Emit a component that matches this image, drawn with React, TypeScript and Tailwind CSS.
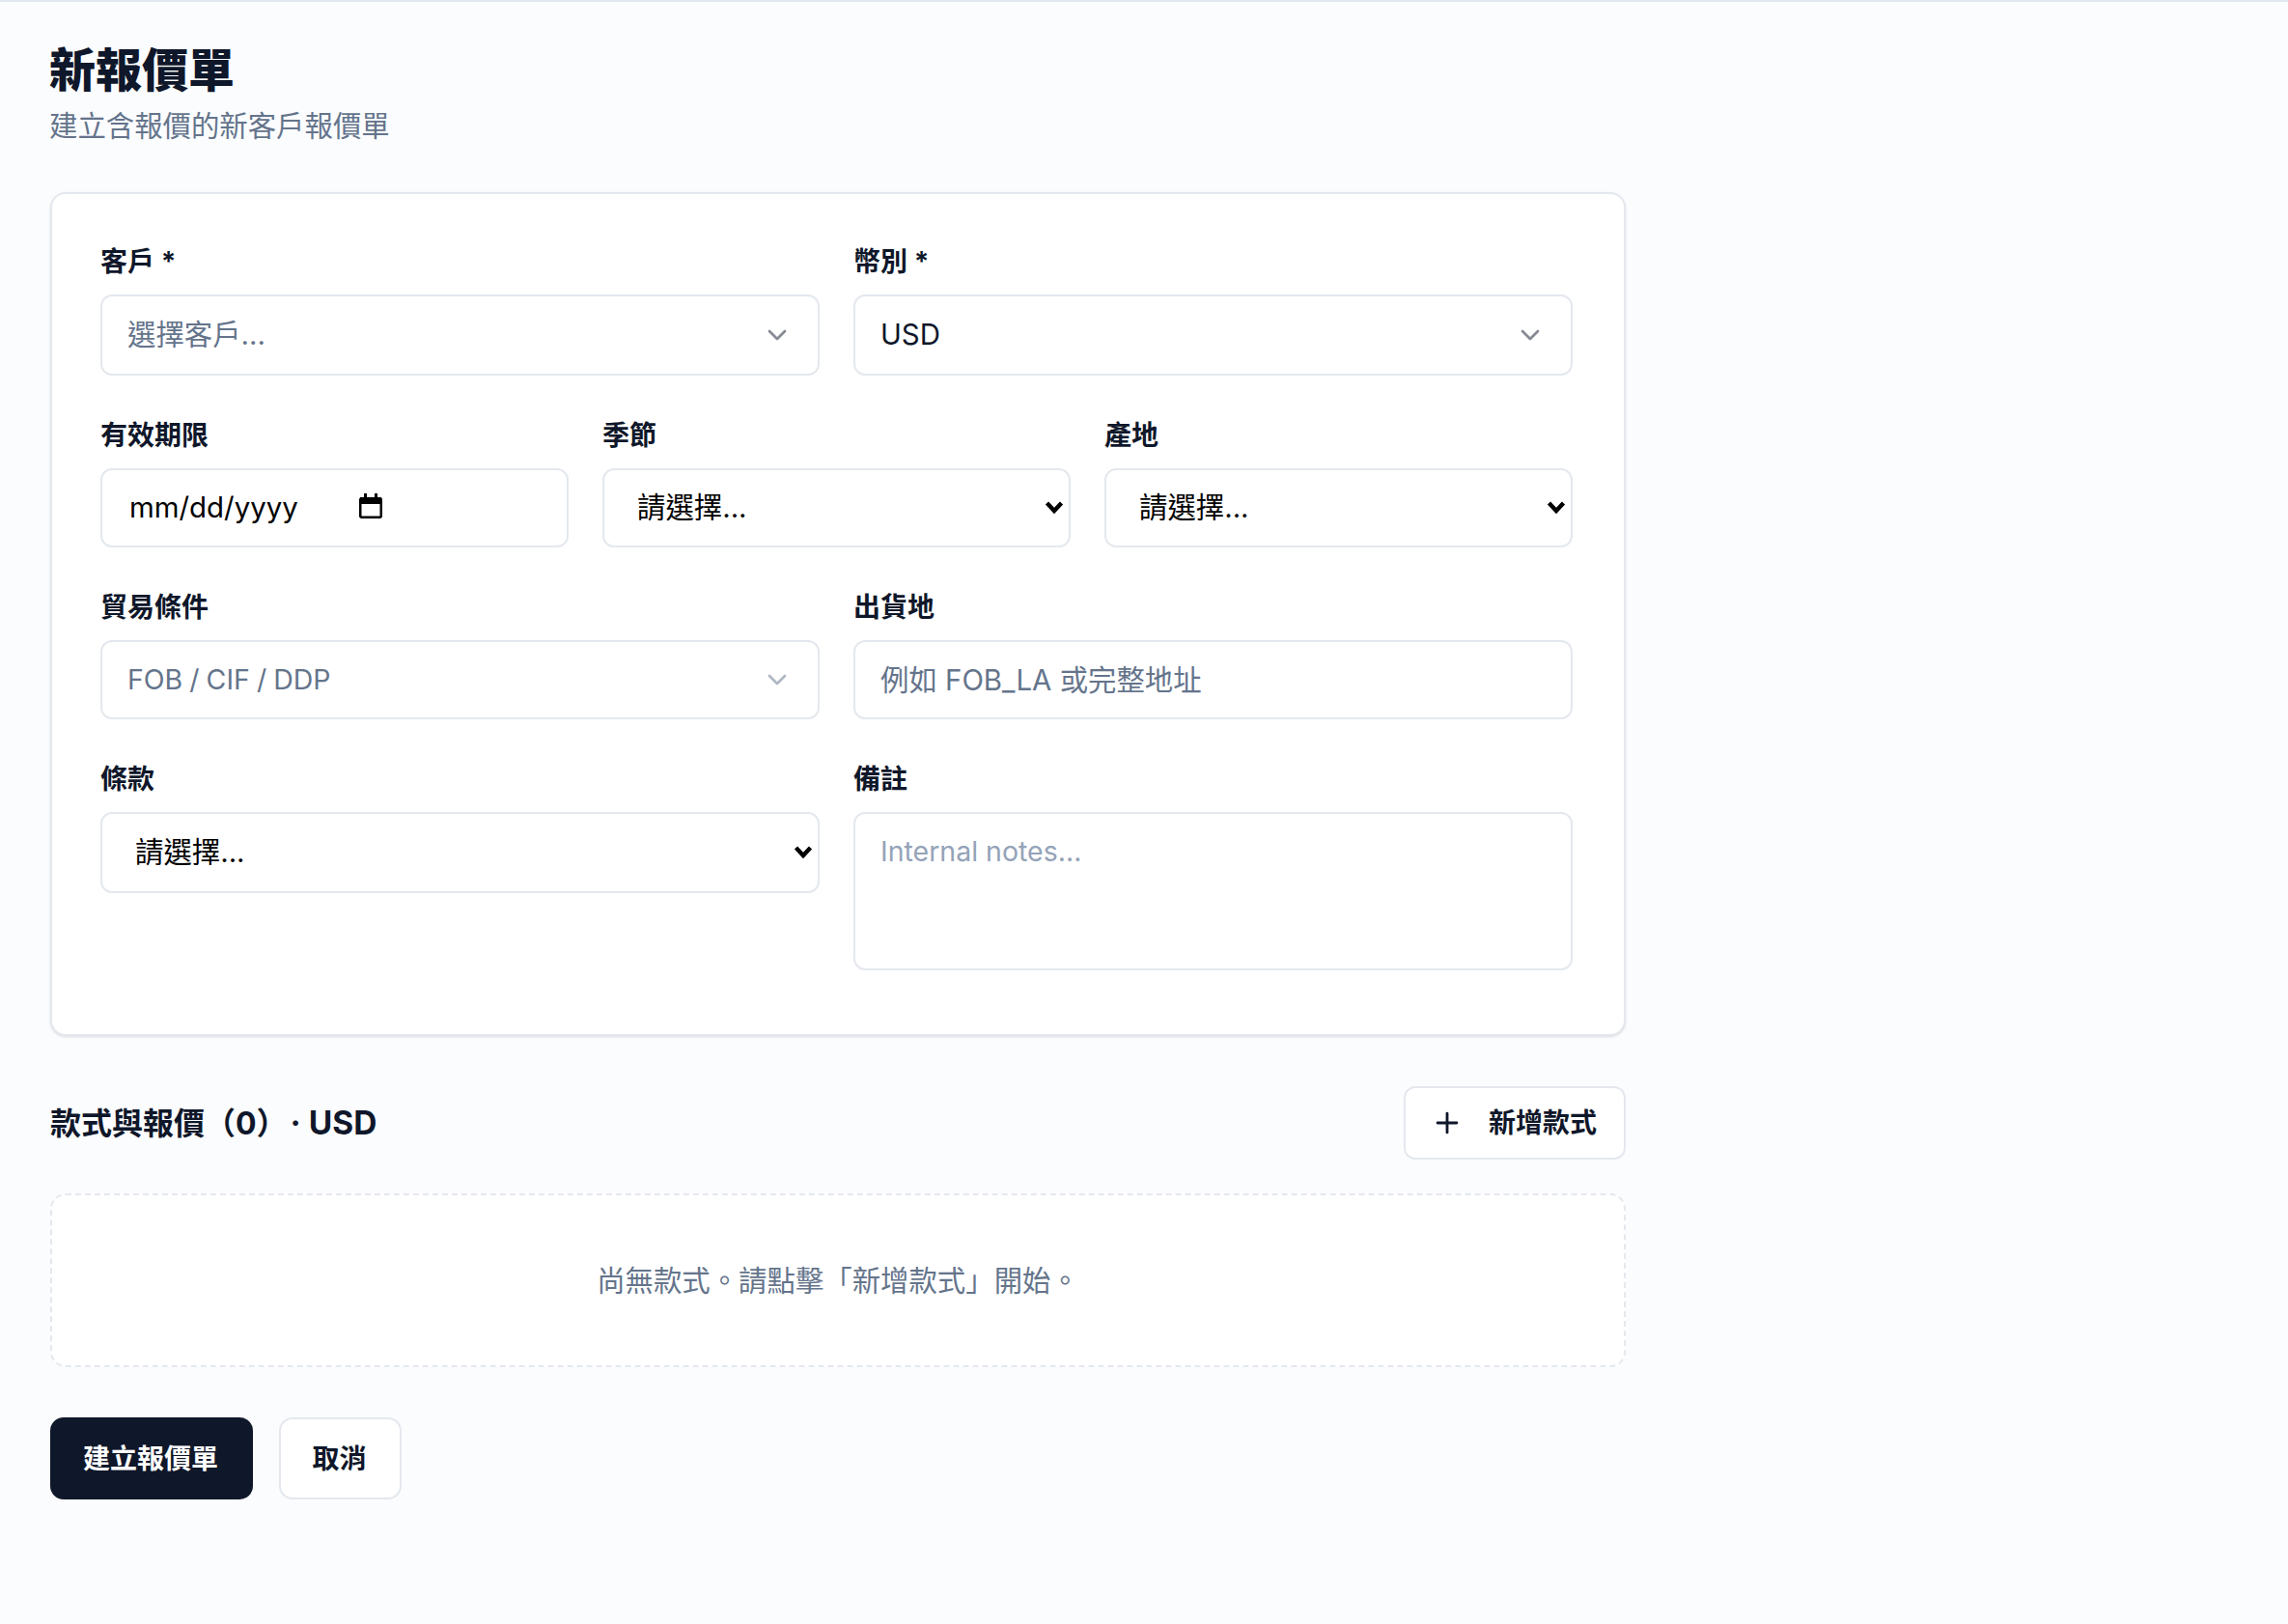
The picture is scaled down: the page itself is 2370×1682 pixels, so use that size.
import React from "react";
import { ChevronDown, Plus } from "lucide-react";

const fieldBox =
  "flex w-full items-center justify-between rounded-[12px] border-2 border-[#e4e8ee] bg-white";

const Label = ({ children }: { children: React.ReactNode }) => (
  <label className="mb-[14px] block text-[28px] leading-[40px] font-bold text-[#0f172a]">
    {children}
  </label>
);

const Combo = ({ text, muted }: { text: string; muted?: boolean }) => (
  <div className={`${fieldBox} h-[84px] pl-[26px] pr-[26px]`}>
    <span className={`text-[29.4px] ${muted ? "text-[#64748b]" : "text-[#0f172a]"}`}>{text}</span>
    <ChevronDown size={32} className="text-[#0f172a] opacity-50" />
  </div>
);

const NativeSelect = ({ h = "h-[82px]" }: { h?: string }) => (
  <div className={`${fieldBox} ${h} pl-[34px] pr-[3px]`}>
    <span className="text-[29.4px] text-black">請選擇...</span>
    <svg width="24" height="16" viewBox="0 0 24 16" fill="none">
      <path d="M4.5 3 L12 11 L19.5 3" stroke="#000" strokeWidth="4.4" />
    </svg>
  </div>
);

export default function App() {
  return (
    <div className="min-h-[1682px] border-t-2 border-[#e2e8f0] bg-[#fbfcfe] pl-[52px] pt-[44px] font-['Inter','Noto_Sans_CJK_TC',sans-serif]">
      <div className="w-[1632px]">
        <h1 className="-ml-[1px] text-[48px] leading-[54px] font-black text-[#0f172a]">新報價單</h1>
        <p className="-ml-[1px] mt-[11px] text-[29.4px] leading-[40px] text-[#64748b]">建立含報價的新客戶報價單</p>

        <div className="mt-[48px] rounded-[16px] border-2 border-[#e4e8ee] bg-white pb-[66px] pl-[50px] pr-[53px] pt-[50px] shadow-sm">
          <div className="grid grid-cols-2 gap-x-[35px]">
            <div>
              <Label>客戶 *</Label>
              <Combo text="選擇客戶..." muted />
            </div>
            <div>
              <Label>幣別 *</Label>
              <Combo text="USD" />
            </div>
          </div>

          <div className="mt-[42px] grid grid-cols-3 gap-x-[35px]">
            <div>
              <Label>有效期限</Label>
              <div className={`${fieldBox} h-[82px] justify-start pl-[28px]`}>
                <span className="text-[29.4px] text-black">mm/dd/yyyy</span>
                <svg width="24" height="26" viewBox="0 0 24 26" className="ml-[63px] -mt-[4px]" fill="none">
                  <rect x="1.25" y="5.25" width="21.5" height="19.5" rx="1.5" stroke="#000" strokeWidth="2.5" />
                  <rect x="1" y="4" width="22" height="7" fill="#000" />
                  <rect x="5" y="0" width="3" height="5" fill="#000" />
                  <rect x="16" y="0" width="3" height="5" fill="#000" />
                </svg>
              </div>
            </div>
            <div>
              <Label>季節</Label>
              <NativeSelect />
            </div>
            <div>
              <Label>產地</Label>
              <NativeSelect />
            </div>
          </div>

          <div className="mt-[42px] grid grid-cols-2 gap-x-[35px]">
            <div>
              <Label>貿易條件</Label>
              <div className={`${fieldBox} h-[82px] pl-[26px] pr-[26px]`}>
                <span className="text-[28.5px] text-[#64748b] [word-spacing:-1px]">FOB / CIF / DDP</span>
                <ChevronDown size={32} className="text-[#64748b] opacity-50" />
              </div>
            </div>
            <div>
              <Label>出貨地</Label>
              <input
                className={`${fieldBox} h-[82px] px-[26px] text-[29.4px] outline-none placeholder:text-[#64748b]`}
                placeholder="例如 FOB_LA 或完整地址"
              />
            </div>
          </div>

          <div className="mt-[42px] grid grid-cols-2 gap-x-[35px]">
            <div>
              <Label>條款</Label>
              <NativeSelect h="h-[84px]" />
            </div>
            <div>
              <Label>備註</Label>
              <textarea
                className={`${fieldBox} block h-[164px] resize-none px-[26px] pb-[20px] pt-[19px] text-[28.5px] leading-[40px] outline-none placeholder:text-[#94a3b8]`}
                placeholder="Internal notes..."
              />
            </div>
          </div>
        </div>

        <div className="mt-[52px] flex items-center justify-between">
          <h2 className="text-[32px] font-bold text-[#0f172a]">
            款式與報價（0）<span className="ml-[19px] text-[33.5px]">· USD</span>
          </h2>
          <button className="flex h-[76px] w-[230px] items-center gap-[26px] rounded-[12px] border-2 border-[#e4e8ee] bg-white pl-[26px] text-[28px] font-bold text-[#0f172a]">
            <Plus size={34} />
            新增款式
          </button>
        </div>

        <div className="mt-[35px] flex h-[180px] items-center justify-center rounded-[16px] border-2 border-dashed border-[#e4e8ee] bg-white pt-[2px] text-[29.4px] text-[#64748b]">
          尚無款式。請點擊「新增款式」開始。
        </div>

        <div className="mt-[52px] flex gap-[27px]">
          <button className="h-[85px] w-[210px] rounded-[14px] bg-[#0f172a] pr-[2px] text-[28px] font-bold text-white">建立報價單</button>
          <button className="h-[85px] w-[127px] rounded-[14px] border-2 border-[#e4e8ee] bg-white pr-[2px] text-[28px] font-bold text-[#0f172a]">取消</button>
        </div>
      </div>
    </div>
  );
}
